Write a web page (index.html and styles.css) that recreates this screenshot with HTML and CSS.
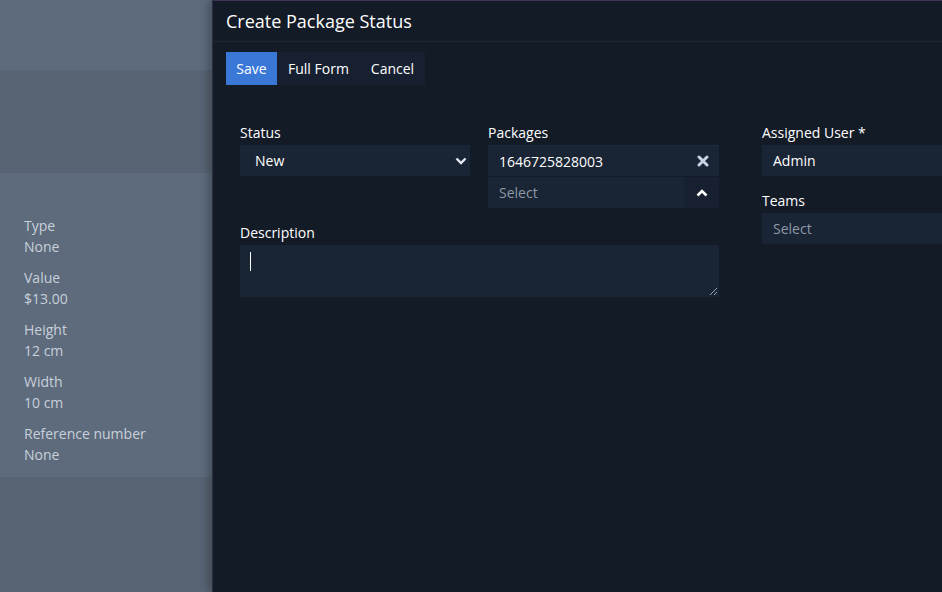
FILE: index.html
```html
<!DOCTYPE html>
<html>
<head>
<meta charset="utf-8">
<link rel="stylesheet" href="styles.css">
</head>
<body>
<div class="page">
  <aside class="bg">
    <div class="band band-a"></div>
    <div class="band band-b"></div>
    <div class="band band-c"></div>
    <div class="details">
      <div class="item"><div class="k">Type</div><div class="v">None</div></div>
      <div class="item"><div class="k">Value</div><div class="v">$13.00</div></div>
      <div class="item"><div class="k">Height</div><div class="v">12 cm</div></div>
      <div class="item"><div class="k">Width</div><div class="v">10 cm</div></div>
      <div class="item"><div class="k">Reference number</div><div class="v">None</div></div>
    </div>
    <div class="band band-d"></div>
  </aside>
  <section class="modal">
    <header class="modal-header">Create Package Status</header>
    <div class="toolbar">
      <button class="btn btn-primary">Save</button>
      <div class="btn-group">
        <button class="btn">Full Form</button>
        <button class="btn">Cancel</button>
      </div>
    </div>
    <div class="form">
      <div class="left">
        <div class="field f-status">
          <label class="lbl">Status</label>
          <div class="input select">
            <span>New</span>
            <svg class="chev" width="12" height="8" viewBox="0 0 12 8"><path d="M1.5 1.5 L6 6 L10.5 1.5" fill="none" stroke="#e6ebf2" stroke-width="2.4"/></svg>
          </div>
        </div>
        <div class="field f-packages">
          <label class="lbl">Packages</label>
          <div class="link-item">
            <span>1646725828003</span>
            <svg class="x" width="12" height="12" viewBox="0 0 12 12"><path d="M2 2 L10 10 M10 2 L2 10" stroke="#c9d3e6" stroke-width="3" stroke-linecap="round"/></svg>
          </div>
          <div class="link-select">
            <div class="input ph">Select</div>
            <div class="up-btn"><svg width="12" height="8" viewBox="0 0 12 8"><path d="M1.5 6.5 L6 2 L10.5 6.5" fill="none" stroke="#ffffff" stroke-width="2.6"/></svg></div>
          </div>
        </div>
        <div class="field f-desc">
          <label class="lbl">Description</label>
          <div class="textarea"><span class="caret"></span><span class="grip"></span></div>
        </div>
      </div>
      <div class="right">
        <div class="field">
          <label class="lbl">Assigned User *</label>
          <div class="input">Admin</div>
        </div>
        <div class="field f-teams">
          <label class="lbl">Teams</label>
          <div class="input ph">Select</div>
        </div>
      </div>
    </div>
  </section>
</div>
</body>
</html>
```

FILE: styles.css
```css
html, body {
  margin: 0;
  padding: 0;
  width: 942px;
  height: 592px;
  overflow: hidden;
  font-family: "Open Sans", "Noto Sans", sans-serif;
  font-size: 14px;
}
.page {
  display: flex;
  height: 592px;
}
.bg {
  width: 212px;
  flex: none;
  display: flex;
  flex-direction: column;
  background: #5c6a7c;
}
.band-a { height: 70px; background: #5d6b7d; }
.band-b { height: 103px; background: #586473; }
.band-c { height: 29px; background: #5d6b7d; }
.details {
  background: #5d6b7d;
  padding: 13px 24px 12px;
  color: #c9d0d9;
  line-height: 21px;
  display: flex;
  flex-direction: column;
  gap: 10px;
}
.band-d { flex: 1; background: #586473; }

.modal {
  flex: 1;
  background: #131b27;
  border-top: 1px solid #3d3356;
  border-left: 1px solid #2a2f45;
  box-shadow: -4px 0 8px rgba(0,0,0,0.25);
  color: #ffffff;
  min-width: 0;
}
.modal-header {
  height: 40px;
  line-height: 40px;
  padding-left: 13px;
  font-size: 18px;
  border-bottom: 1px solid #1d2836;
  color: #ffffff;
}
.toolbar {
  display: flex;
  padding: 10px 13px 0;
  height: 33px;
}
.btn {
  border: 0;
  font: inherit;
  color: #ffffff;
  background: #172030;
  height: 33px;
  padding: 0 11px;
  margin: 0;
  font-size: 14px;
}
.btn-primary {
  background: #3a78d8;
  width: 51px;
  padding: 0;
}
.btn-group { display: flex; background: #172030; }
.form {
  display: flex;
  padding: 38px 0 0 27px;
}
.left {
  width: 479px;
  display: grid;
  grid-template-columns: 230px 231px;
  column-gap: 18px;
  row-gap: 0;
  align-items: start;
}
.right {
  margin-left: 43px;
  width: 200px;
  flex: none;
}
.field { display: flex; flex-direction: column; }
.lbl {
  line-height: 20px;
  margin-bottom: 2px;
  color: #ffffff;
}
.input {
  background: #192434;
  height: 31px;
  line-height: 31px;
  padding: 0 11px;
  color: #ffffff;
  box-sizing: border-box;
}
.ph { color: #8f99a6; }
.select {
  display: flex;
  align-items: center;
  justify-content: space-between;
  padding: 0 3px 0 15px;
}
.link-item {
  height: 31px;
  background: #192434;
  border-top: 1px solid #202c3e;
  box-sizing: border-box;
  display: flex;
  align-items: center;
  justify-content: space-between;
  padding: 0 10px 0 11px;
}
.link-item span { color: #ffffff; }
.link-select {
  display: flex;
  margin-top: 1px;
}
.link-select .input { flex: 1; }
.up-btn {
  width: 35px;
  height: 31px;
  background: #172030;
  display: flex;
  align-items: center;
  justify-content: center;
}
.f-desc {
  grid-column: 1 / 3;
  margin-top: 15px;
}
.textarea {
  height: 52px;
  background: #192434;
  position: relative;
}
.caret {
  position: absolute;
  left: 10px;
  top: 7px;
  width: 1px;
  height: 19px;
  background: #ffffff;
}
.grip {
  position: absolute;
  right: 2px;
  bottom: 2px;
  width: 7px;
  height: 7px;
  background: linear-gradient(135deg, transparent 45%, #9aa3ae 45%, #9aa3ae 55%, transparent 55%, transparent 75%, #9aa3ae 75%, #9aa3ae 85%, transparent 85%);
}
.f-teams { margin-top: 15px; }
.right .input { width: 220px; }
```
